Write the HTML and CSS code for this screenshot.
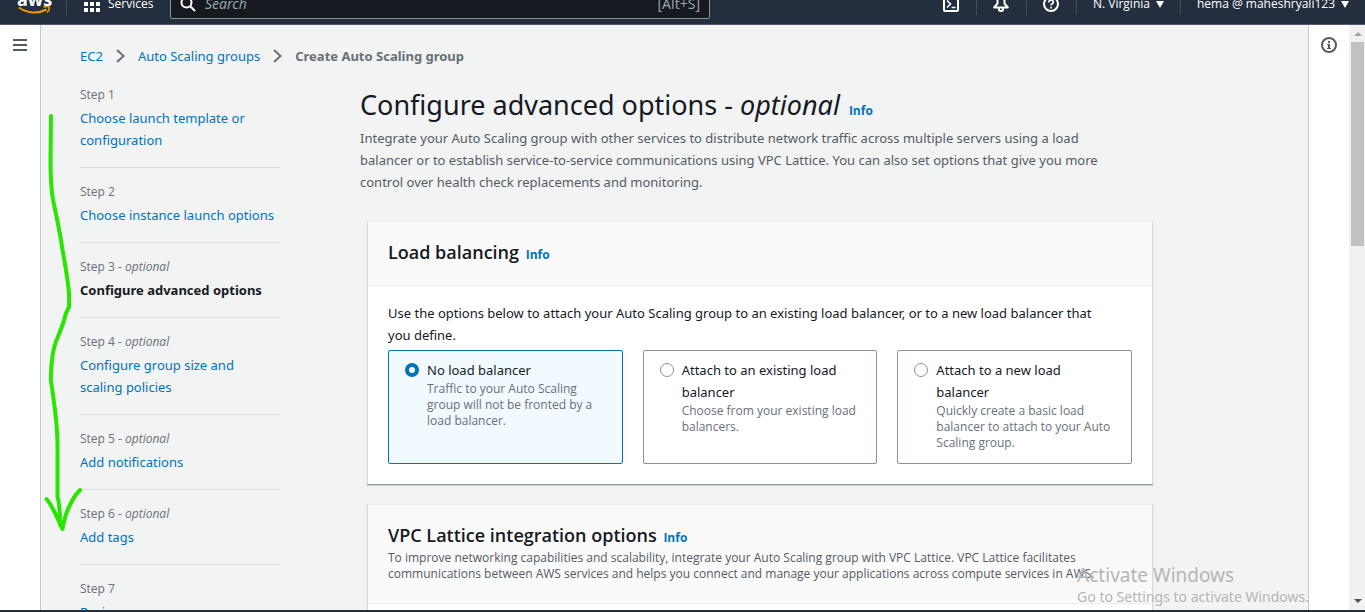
FILE: index.html
```html
<!DOCTYPE html>
<html lang="en">
<head>
<meta charset="utf-8">
<title>Create Auto Scaling group | EC2</title>
<link rel="stylesheet" href="styles.css">
</head>
<body>
<header class="topbar">
  <div class="topbar-row">
    <a class="logo" href="#" aria-label="AWS home">
      <span class="logo-text">aws</span>
      <svg class="logo-smile" width="34" height="10" viewBox="0 0 34 10" fill="none" stroke="#ff9900"><path d="M2 2.500C10 8.500 21 9 29.500 4.500" stroke-width="2"/><path d="M26.500 2.300C29.500 1.300 32 1.500 32.300 2.300C32.500 3.500 31.500 6 30 7.500" stroke-width="1.500"/></svg>
    </a>
    <button class="services" type="button">
      <svg width="16" height="16" viewBox="0 0 16 16" fill="#fff"><path d="M0 0h4v4H0zM6 0h4v4H6zM12 0h4v4h-4zM0 6h4v4H0zM6 6h4v4H6zM12 6h4v4h-4zM0 12h4v4H0zM6 12h4v4H6zM12 12h4v4h-4z"/></svg>
      <span>Services</span>
    </button>
    <label class="search">
      <svg width="16" height="16" viewBox="0 0 16 16" fill="none" stroke="#fff" stroke-width="2"><circle cx="6.500" cy="6.500" r="5"/><path d="M10 10l5 5"/></svg>
      <input type="search" placeholder="Search" aria-label="Search">
      <span class="shortcut">[Alt+S]</span>
    </label>
    <div class="tools">
      <button class="tool" type="button" aria-label="CloudShell"><svg width="16" height="16" viewBox="0 0 16 16" fill="none" stroke="#fff" stroke-width="2"><rect x="1" y="1" width="14" height="14" rx="1"/><path d="M4 4.500l3.500 3.500L4 11.500M8.500 11.500h4" stroke-width="1.600"/></svg></button>
      <button class="tool" type="button" aria-label="Notifications"><svg width="16" height="16" viewBox="0 0 16 16" fill="none" stroke="#fff" stroke-width="2" stroke-linejoin="round"><path d="M1.200 11.500L4.500 7.500V5C4.500 3 6 1.500 8 1.500s3.500 1.500 3.500 3.500v2.500l3.300 4z"/><path d="M6 12v1.500a2 1.500 0 0 0 4 0V12"/></svg></button>
      <button class="tool" type="button" aria-label="Help"><svg width="16" height="16" viewBox="0 0 16 16" fill="none" stroke="#fff" stroke-width="2"><circle cx="8" cy="8" r="7"/><path d="M5.700 6.500C5.700 5 6.700 4.200 8 4.200S10.400 5 10.400 6.200C10.400 7.500 8 7.700 8 9.500M8 10.800v1.600" stroke-width="1.700"/></svg></button>
      <button class="menu" type="button">N. Virginia <svg width="8" height="7" viewBox="0 0 8 7" fill="#fff"><path d="M0 0h8L4 7z"/></svg></button>
      <button class="menu account" type="button">hema @ maheshryali123 <svg width="8" height="7" viewBox="0 0 8 7" fill="#fff"><path d="M0 0h8L4 7z"/></svg></button>
    </div>
  </div>
</header>

<div class="shell">
  <aside class="rail rail-left">
    <button type="button" aria-label="Open navigation"><svg width="14" height="12" viewBox="0 0 14 12" fill="#545b64"><path d="M0 0h14v2H0zM0 5h14v2H0zM0 10h14v2H0z"/></svg></button>
  </aside>

  <div class="content">
    <nav class="crumbs" aria-label="Breadcrumbs">
      <a href="#">EC2</a>
      <svg width="9" height="14" viewBox="0 0 9 14" fill="none" stroke="#687078" stroke-width="2"><path d="M1 1l6.500 6L1 13"/></svg>
      <a href="#">Auto Scaling groups</a>
      <svg width="9" height="14" viewBox="0 0 9 14" fill="none" stroke="#687078" stroke-width="2"><path d="M1 1l6.500 6L1 13"/></svg>
      <strong>Create Auto Scaling group</strong>
    </nav>
    <div class="wizard">
      <ol class="steps">
        <li><small>Step 1</small><a href="#">Choose launch template or configuration</a></li>
        <li><small>Step 2</small><a href="#">Choose instance launch options</a></li>
        <li><small>Step 3 - <em>optional</em></small><strong>Configure advanced options</strong></li>
        <li><small>Step 4 - <em>optional</em></small><a href="#">Configure group size and scaling policies</a></li>
        <li><small>Step 5 - <em>optional</em></small><a href="#">Add notifications</a></li>
        <li><small>Step 6 - <em>optional</em></small><a href="#">Add tags</a></li>
        <li><small>Step 7</small><a href="#">Review</a></li>
      </ol>
      <main class="page">
        <h1>Configure advanced options - <em>optional</em> <a class="info" href="#">Info</a></h1>
        <p class="intro">Integrate your Auto Scaling group with other services to distribute network traffic across multiple servers using a load balancer or to establish service-to-service communications using VPC Lattice. You can also set options that give you more control over health check replacements and monitoring.</p>
        <section class="card">
          <div class="card-head"><h2>Load balancing <a class="info" href="#">Info</a></h2></div>
          <fieldset class="card-body">
            <legend>Use the options below to attach your Auto Scaling group to an existing load balancer, or to a new load balancer that you define.</legend>
            <div class="tiles">
              <label class="tile"><input type="radio" name="lb" checked><span><b>No load balancer</b><small>Traffic to your Auto Scaling group will not be fronted by a load balancer.</small></span></label>
              <label class="tile"><input type="radio" name="lb"><span><b>Attach to an existing load balancer</b><small>Choose from your existing load balancers.</small></span></label>
              <label class="tile"><input type="radio" name="lb"><span><b>Attach to a new load balancer</b><small>Quickly create a basic load balancer to attach to your Auto Scaling group.</small></span></label>
            </div>
          </fieldset>
        </section>
        <section class="card">
          <div class="card-head"><h2>VPC Lattice integration options <a class="info" href="#">Info</a></h2>
            <p>To improve networking capabilities and scalability, integrate your Auto Scaling group with VPC Lattice. VPC Lattice facilitates communications between AWS services and helps you connect and manage your applications across compute services in AWS.</p></div>
          <div class="card-body"></div>
        </section>
      </main>
    </div>
  </div>

  <aside class="rail rail-right">
    <button type="button" aria-label="Info panel"><svg width="16" height="16" viewBox="0 0 16 16" fill="none" stroke="#545b64"><circle cx="8" cy="8" r="7" stroke-width="2"/><path d="M7 4h2v2H7zM6 7h3v4h1v1H6v-1h1V8H6z" fill="#545b64" stroke="none"/></svg></button>
  </aside>
  <div class="scrollbar" aria-hidden="true">
    <svg width="8" height="4" viewBox="0 0 8 4" fill="#a3a3a3"><path d="M0 4h8L4 0z"/></svg>
    <div class="track"><div class="thumb"></div></div>
    <svg width="8" height="4" viewBox="0 0 8 4" fill="#505050"><path d="M0 0h8L4 4z"/></svg>
  </div>
</div>
<footer class="bottombar"></footer>

<svg class="scribble" width="90" height="540" viewBox="0 0 90 540" fill="none" stroke="#29e600" stroke-width="4" stroke-linecap="round" stroke-linejoin="round" aria-hidden="true">
  <path d="M51 116L50.500 160Q50.500 185 53 200Q60 232 62.500 250Q68 280 69 294V307L66 313Q64 322 59 334Q53 347 52 360Q50.500 375 51 381Q53 395 55 410Q58 435 57.500 455V497Q60 505 60 525"/>
  <path d="M46.500 499Q50 503 55 513L62.500 529Q65 514 70 505Q74 496 80 490"/>
</svg>
<div class="watermark"><div class="wm-title">Activate Windows</div><div>Go to Settings to activate Windows.</div></div>
</body>
</html>
```
FILE: styles.css
```css
* { box-sizing: border-box; }
body {
  margin: 0;
  height: 100vh;
  display: flex;
  flex-direction: column;
  overflow: hidden;
  font: 13px/22px "Noto Sans", "Open Sans", sans-serif;
  color: #16191f;
  background: #f2f3f3;
}
a { color: #0073bb; text-decoration: none; }
button { border: 0; padding: 0; background: none; font: inherit; color: inherit; display: flex; align-items: center; }
svg { flex: none; display: block; }
small { font: 12px/16px "Open Sans", sans-serif; color: #687078; display: block; }

/* Top bar: the row is taller than the bar and scrolled partly out of view */
.topbar {
  flex: none;
  height: 25px;
  overflow: hidden;
  display: flex;
  flex-direction: column;
  justify-content: flex-end;
  background: #232f3e;
  border-bottom: 1px solid #545b64;
  color: #fff;
}
.topbar-row { flex: none; height: 40px; display: flex; align-items: center; font: 500 12px/22px "Open Sans", sans-serif; }
.logo { width: 67px; height: 22px; padding-left: 17px; border-right: 1px solid #414d5c; color: #fff; display: flex; flex-direction: column; }
.logo-text { font: 700 18px/12px "Open Sans", sans-serif; width: 34px; text-align: center; }
.services { height: 22px; padding-left: 17px; gap: 8px; width: 103px; }
.search { width: 540px; height: 30px; display: flex; align-items: center; gap: 9px; padding: 0 9px; background: #16191f; border: 1px solid #879596; border-radius: 2px; }
.search input { flex: 1; min-width: 0; border: 0; outline: 0; padding: 0; background: none; color: #fff; font: italic 14px/20px "Noto Sans", sans-serif; }
.search input::placeholder { color: #95a5a6; opacity: 1; }
.shortcut { font: 14px/22px "Noto Sans", sans-serif; color: #95a5a6; }
.tools { margin-left: auto; display: flex; align-items: center; }
.tool { width: 50px; height: 22px; justify-content: center; border-right: 1px solid #414d5c; }
.menu { height: 22px; padding: 0 16px; gap: 6px; border-right: 1px solid #414d5c; }
.account { border-right: 0; }

.shell { flex: 1; min-height: 0; display: flex; overflow: hidden; }
.rail { flex: none; width: 41px; background: #fff; padding-top: 12px; }
.rail button { height: 16px; margin: 0 auto; }
.rail-left { border-right: 1px solid #c5cbcb; }
.rail-right { border-left: 1px solid #c5cbcb; }
.content { flex: 1; min-width: 0; padding: 20px 40px 0 39px; }
.crumbs { display: flex; align-items: center; gap: 13px; }
.crumbs strong { color: #687078; font-weight: 700; }
.wizard { display: flex; gap: 80px; padding-top: 20px; }

.steps { flex: none; width: 200px; margin: 0; padding: 0; list-style: none; }
.steps li { padding-bottom: 16px; margin-bottom: 16px; border-bottom: 1px solid #d5dbdb; }
.steps li > a, .steps li > strong { display: block; margin-top: 4px; padding-right: 4px; }
.steps strong { font-weight: 700; }

.page { flex: 1; min-width: 0; max-width: 800px; }
h1 { margin: 0 0 4px; font-size: 27px; line-height: 36px; font-weight: 400; }
.info { font: 700 12px/12px "Open Sans", sans-serif; margin-left: 2px; }
.intro { margin: 0 0 28px; padding-right: 40px; color: #545b64; }
.card { margin: 0 7px 19px; background: #fff; border: 1px solid #d5dbdb; border-top-color: #eaeded; border-bottom-color: #879596; box-shadow: 0 1px 1px #001c2426; }
.card-head { padding: 18px 20px 21px; background: #fafafa; border-bottom: 1px solid #eaeded; }
h2 { margin: 0; font: 600 18px/24px "Open Sans", sans-serif; }
.card-head p { margin: 3px 0 0; font: 12px/16px "Open Sans", sans-serif; color: #545b64; }
.card-body { margin: 0; border: 0; padding: 16px 20px 20px; }
.card-body legend { float: left; padding: 0 24px 0 0; margin-bottom: 4px; }
.tiles { clear: both; display: grid; grid-template-columns: repeat(3, 1fr); gap: 20px; }
.tile { display: flex; align-items: flex-start; gap: 8px; padding: 8px 16px 12px; border: 1px solid #879596; border-radius: 2px; }
.tile:has(:checked) { background: #f1faff; border-color: #0073bb; }
.tile b { display: block; font-weight: 400; }
.tile input { appearance: none; flex: none; width: 14px; height: 14px; margin: 4px 0; border: 1px solid #879596; border-radius: 50%; background: #fff; }
.tile input:checked { border: 4px solid #0073bb; }

.scrollbar { flex: none; width: 16px; background: #f1f1f1; display: flex; flex-direction: column; align-items: center; padding: 7px 1px 7px 2px; }
.track { flex: 1; width: 100%; padding: 6px 0; }
.thumb { height: 37%; background: #c1c1c1; }
.bottombar { flex: none; height: 2px; background: #232f3e; }

.scribble { position: absolute; left: 0; top: 0; pointer-events: none; }
.watermark { position: absolute; right: 56px; bottom: 4px; color: #b4b6b7; font: 14px/22px "Noto Sans", sans-serif; pointer-events: none; }
.wm-title { font-size: 19px; }
```
